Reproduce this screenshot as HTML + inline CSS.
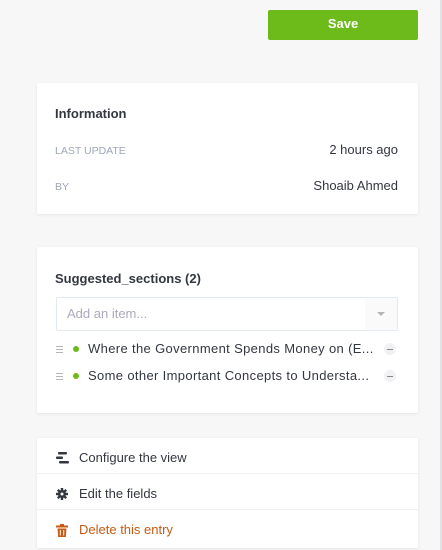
<!DOCTYPE html>
<html><head><style>
*{box-sizing:border-box;margin:0;padding:0}
body{width:442px;height:550px;background:#f7f7f8;font-family:"Liberation Sans",sans-serif;position:relative;overflow:hidden;color:#333740}
.edge{position:absolute;right:0;top:0;width:2px;height:550px;background:#e2e2e4}
.save{position:absolute;left:268px;top:10px;width:150px;height:30px;background:#6dbb1a;border-radius:2px;color:#fff;font-weight:bold;font-size:13px;text-align:center;line-height:27px}
.card{position:absolute;left:37px;width:381px;background:#fff;box-shadow:0 1px 3px rgba(0,0,0,.08);border-radius:2px}
.t{font-weight:bold;font-size:13px;color:#333740;position:absolute;left:18px}
.lbl{position:absolute;left:18px;font-size:10.5px;color:#9ea7b8;text-transform:uppercase}
.val{position:absolute;right:20px;font-size:13px;color:#333740}
.inp{position:absolute;left:19px;top:50px;width:342px;height:34px;border:1px solid #e3e9f3;border-radius:2px;font-size:13px;color:#aab;line-height:32px;padding-left:10px}
.inp .arr{position:absolute;right:0;top:0;width:32px;height:32px;background:#fafafb}
.inp .arr:after{content:"";position:absolute;left:12px;top:14px;border:4px solid transparent;border-top:4px solid #b3b5b9}
.it{position:absolute;left:19px;font-size:13px;color:#333740;width:350px;height:20px;line-height:20px;letter-spacing:.35px}
.it .h{position:absolute;left:0;top:7px;width:7px;height:1px;background:#b4b6ba;box-shadow:0 3px 0 #b4b6ba,0 6px 0 #b4b6ba}
.it .d{position:absolute;left:17px;top:7px;width:6px;height:6px;border-radius:50%;background:#6dbb1a}
.it .x{position:absolute;left:32px}
.it .m{position:absolute;left:328px;top:4px;width:12px;height:12px;border-radius:50%;background:#f1f1f3}
.it .m:after{content:"";position:absolute;left:3px;top:5.5px;width:6px;height:1px;background:#888}
.row{position:absolute;left:0;width:381px;height:36px;border-bottom:1px solid #f0f1f3;font-size:13px;line-height:36px;padding-left:42px;padding-top:2px}
.row svg{position:absolute;left:19px;top:14px}
</style></head><body>
<div class="edge"></div>
<div class="save">Save</div>
<div class="card" style="top:83px;height:131px">
 <div class="t" style="top:23px">Information</div>
 <div class="lbl" style="top:62px">Last update</div><div class="val" style="top:59px">2 hours ago</div>
 <div class="lbl" style="top:98px">By</div><div class="val" style="top:95px">Shoaib Ahmed</div>
</div>
<div class="card" style="top:247px;height:166px">
 <div class="t" style="top:24px">Suggested_sections (2)</div>
 <div class="inp">Add an item...<div class="arr"></div></div>
 <div class="it" style="top:92px"><span class="h"></span><span class="d"></span><span class="x">Where the Government Spends Money on (E...</span><span class="m"></span></div>
 <div class="it" style="top:119px"><span class="h"></span><span class="d"></span><span class="x">Some other Important Concepts to Understa...</span><span class="m"></span></div>
</div>
<div class="card" style="top:438px;height:110px">
 <div class="row" style="top:0">
  <svg width="13" height="12" viewBox="0 0 13 12"><rect x="2" y="0" width="9" height="2.5" rx="1" fill="#333740"/><rect x="0" y="4.5" width="7" height="2.5" rx="1" fill="#333740"/><rect x="3" y="9" width="10" height="2.5" rx="1" fill="#333740"/></svg>Configure the view</div>
 <div class="row" style="top:36px">
  <svg width="12" height="12" viewBox="0 0 12 12"><circle cx="6" cy="6" r="4" fill="#333740"/><g stroke="#333740" stroke-width="2.4"><line x1="6" y1="0" x2="6" y2="12"/><line x1="0" y1="6" x2="12" y2="6"/><line x1="1.8" y1="1.8" x2="10.2" y2="10.2"/><line x1="10.2" y1="1.8" x2="1.8" y2="10.2"/></g><circle cx="6" cy="6" r="1.5" fill="#fff"/></svg>Edit the fields</div>
 <div class="row" style="top:72px;color:#c75a12;border:none">
  <svg width="12" height="13" viewBox="0 0 12 13"><rect x="0" y="1.5" width="12" height="2" fill="#c75a12"/><rect x="4" y="0" width="4" height="2" fill="#c75a12"/><path d="M1.5 4.5h9l-.7 8.5h-7.6z" fill="#c75a12"/><g stroke="#fff" stroke-width="1"><line x1="4.3" y1="6" x2="4.3" y2="11.5"/><line x1="7.7" y1="6" x2="7.7" y2="11.5"/></g></svg>Delete this entry</div>
</div>
</body></html>
